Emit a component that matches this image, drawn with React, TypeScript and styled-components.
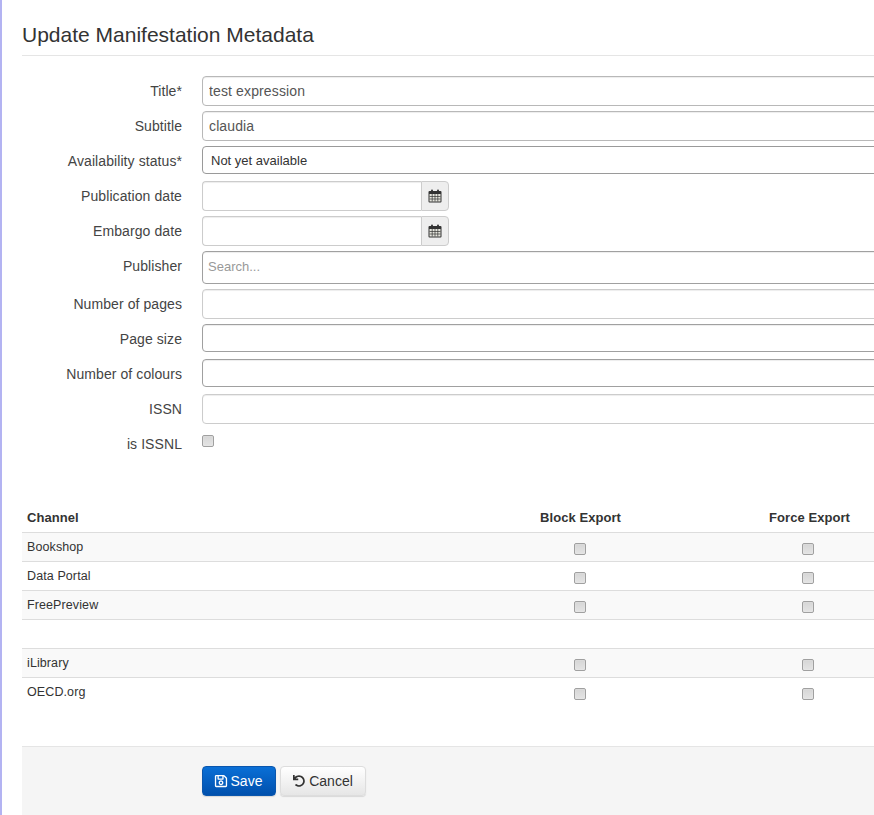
import React from 'react';
import styled, { createGlobalStyle } from 'styled-components';
import { FaRegSave, FaUndo } from 'react-icons/fa';

const GlobalStyle = createGlobalStyle`
  html, body {
    margin: 0;
    padding: 0;
    height: 100%;
    overflow: hidden;
    background: #fff;
  }
  body {
    font-family: 'Liberation Sans', Arial, sans-serif;
    font-size: 14px;
    color: #333;
  }
`;

const Page = styled.div`
  width: 874px;
  height: 815px;
  box-sizing: border-box;
  overflow: hidden;
  border-left: 2px solid #b3b3f2;
  padding: 22px 0 0 20px;
`;

const Content = styled.div`
  width: 902px;
`;

const Heading = styled.h2`
  margin: 0 0 20px;
  padding: 1px 0 8px;
  border-bottom: 1px solid #e5e5e5;
  font-size: 21px;
  line-height: 24px;
  font-weight: 400;
  color: #333;
`;

const FormRow = styled.div`
  display: grid;
  grid-template-columns: 160px 1fr;
  column-gap: 20px;
  align-items: start;
  min-height: 30px;
  margin-bottom: 5px;
`;

const RowLabel = styled.label`
  display: block;
  text-align: right;
  line-height: 30px;
  letter-spacing: 0.08px;
  color: #444;
`;

const TextInput = styled.input<{ $border?: string; $height?: number }>`
  display: block;
  box-sizing: border-box;
  width: 100%;
  height: ${(p) => p.$height ?? 30}px;
  padding: 0 6px;
  border: 1px solid ${(p) => p.$border ?? '#ccc'};
  border-radius: 4px;
  box-shadow: inset 0 1px 1px rgba(0, 0, 0, 0.075);
  background: #fff;
  font: 14px 'Liberation Sans', Arial, sans-serif;
  letter-spacing: 0.13px;
  color: #555;
  outline: none;

  &::placeholder {
    color: #999;
    opacity: 1;
  }
`;

const SearchInput = styled(TextInput)`
  height: 33px;
  padding: 0 5px 2px;
  font-size: 13px;
  letter-spacing: 0;
`;

const SelectInput = styled.select`
  display: block;
  box-sizing: border-box;
  width: 100%;
  height: 28px;
  padding: 0 8px;
  border: 1px solid #9a9a9a;
  border-radius: 4px;
  background: #fff;
  font: 13px 'Liberation Sans', Arial, sans-serif;
  color: #333;
  appearance: none;
  outline: none;
`;

const DateGroup = styled.div`
  display: flex;
  width: 247px;
  height: 30px;
`;

const DateInput = styled(TextInput)`
  flex: 1;
  width: auto;
  min-width: 0;
  border-radius: 4px 0 0 4px;
  border-right: 0;
`;

const DateAddon = styled.span`
  display: flex;
  align-items: center;
  justify-content: center;
  box-sizing: border-box;
  width: 28px;
  border: 1px solid #ccc;
  border-radius: 0 4px 4px 0;
  background: #eee;
`;

const CheckBox = styled.input.attrs({ type: 'checkbox' })`
  display: block;
  box-sizing: border-box;
  width: 12px;
  height: 12px;
  margin: 0;
  appearance: none;
  border: 1px solid #a0a0a0;
  border-radius: 2px;
  background: linear-gradient(to bottom, #d6d6d6, #e4e4e4);
  box-shadow: inset 0 0 1px #fff;
`;

const CheckRow = styled(FormRow)`
  margin-bottom: 0;
`;

const CheckWrap = styled.div`
  padding-top: 6px;
`;

const ChannelTable = styled.table`
  width: 900px;
  margin-top: 43px;
  border-collapse: collapse;
  table-layout: fixed;
  font-size: 12.5px;
  letter-spacing: 0.1px;
`;

const WideCol = styled.col`
  width: 444px;
`;

const NarrowCol = styled.col`
  width: 228px;
`;

const HeadCell = styled.th<{ $center?: boolean }>`
  height: 30px;
  padding: ${(p) => (p.$center ? '0 0 0 1px' : '0 5px')};
  border-bottom: 1px solid #ddd;
  text-align: ${(p) => (p.$center ? 'center' : 'left')};
  font-size: 13px;
  font-weight: 700;
  letter-spacing: 0.05px;
  color: #333;

  &:nth-child(3) {
    padding-left: 3px;
  }
`;

const TableRow = styled.tr<{ $striped?: boolean; $last?: boolean }>`
  height: 29px;
  background: ${(p) => (p.$striped ? '#f9f9f9' : '#fff')};
  border-bottom: ${(p) => (p.$last ? '0' : '1px solid #ddd')};
`;

const NameCell = styled.td`
  padding: 0 5px 1px;
  color: #333;
`;

const BoxCell = styled.td`
  padding: 3px 0 0;

  & > input {
    margin: 0 auto;
  }
`;

const ActionBar = styled.div`
  display: flex;
  gap: 4px;
  height: 69px;
  box-sizing: border-box;
  margin-top: 39px;
  padding: 19px 0 0 180px;
  border-top: 1px solid #e5e5e5;
  background: #f5f5f5;
`;

const Button = styled.button<{ $primary?: boolean }>`
  display: inline-flex;
  align-items: center;
  justify-content: center;
  gap: ${(p) => (p.$primary ? 3 : 4)}px;
  box-sizing: border-box;
  height: 30px;
  width: ${(p) => (p.$primary ? 74 : 86)}px;
  padding: 0 ${(p) => (p.$primary ? 2 : 0)}px 0 0;
  border: 1px solid ${(p) => (p.$primary ? '#0a56ad' : '#ddd')};
  border-radius: 4px;
  background: ${(p) =>
    p.$primary
      ? 'linear-gradient(to bottom, #0a6fd6, #0050ad)'
      : 'linear-gradient(to bottom, #fff, #e6e6e6)'};
  box-shadow: 0 1px 1px rgba(0, 0, 0, 0.12);
  font: 14px 'Liberation Sans', Arial, sans-serif;
  color: ${(p) => (p.$primary ? '#fff' : '#333')};
`;

// glyphicon style calendar, the packages only have the solid one
const CalendarIcon = () => (
  <svg width="14" height="14" viewBox="0 0 14 14" aria-hidden="true">
    <rect x="0.5" y="2" width="13" height="11.5" fill="#333" rx="1" />
    <rect x="3" y="0.5" width="2" height="3" fill="#333" rx="1" />
    <rect x="9" y="0.5" width="2" height="3" fill="#333" rx="1" />
    <rect x="1.5" y="5" width="11" height="7.5" fill="#e6e6de" />
    <path d="M1.5 7.5h11M1.5 10h11M4.2 5v7.5M7 5v7.5M9.8 5v7.5" stroke="#333" strokeWidth="0.7" />
  </svg>
);

const channels = [
  { name: 'Bookshop', striped: true },
  { name: 'Data Portal' },
  { name: 'FreePreview', striped: true },
  { name: '', empty: true },
  { name: 'iLibrary', striped: true },
  { name: 'OECD.org', last: true },
];

const App: React.FC = () => {
  return (
    <Page>
      <GlobalStyle />
      <Content>
        <Heading>Update Manifestation Metadata</Heading>

        <form>
          <FormRow>
            <RowLabel>Title*</RowLabel>
            <TextInput defaultValue="test expression" $border="#b8b8b8" />
          </FormRow>
          <FormRow>
            <RowLabel>Subtitle</RowLabel>
            <TextInput defaultValue="claudia" $border="#b8b8b8" />
          </FormRow>
          <FormRow>
            <RowLabel>Availability status*</RowLabel>
            <SelectInput defaultValue="no">
              <option value="no">Not yet available</option>
            </SelectInput>
          </FormRow>
          <FormRow>
            <RowLabel>Publication date</RowLabel>
            <DateGroup>
              <DateInput />
              <DateAddon>
                <CalendarIcon />
              </DateAddon>
            </DateGroup>
          </FormRow>
          <FormRow>
            <RowLabel>Embargo date</RowLabel>
            <DateGroup>
              <DateInput />
              <DateAddon>
                <CalendarIcon />
              </DateAddon>
            </DateGroup>
          </FormRow>
          <FormRow>
            <RowLabel>Publisher</RowLabel>
            <SearchInput placeholder="Search..." $border="#a0a0a0" />
          </FormRow>
          <FormRow>
            <RowLabel>Number of pages</RowLabel>
            <TextInput />
          </FormRow>
          <FormRow>
            <RowLabel>Page size</RowLabel>
            <TextInput $border="#a0a0a0" $height={28} />
          </FormRow>
          <FormRow>
            <RowLabel>Number of colours</RowLabel>
            <TextInput $border="#a0a0a0" $height={28} />
          </FormRow>
          <FormRow>
            <RowLabel>ISSN</RowLabel>
            <TextInput />
          </FormRow>
          <CheckRow>
            <RowLabel>is ISSNL</RowLabel>
            <CheckWrap>
              <CheckBox />
            </CheckWrap>
          </CheckRow>

          <ChannelTable>
            <colgroup>
              <WideCol />
              <NarrowCol />
              <NarrowCol />
            </colgroup>
            <thead>
              <tr>
                <HeadCell>Channel</HeadCell>
                <HeadCell $center>Block Export</HeadCell>
                <HeadCell $center>Force Export</HeadCell>
              </tr>
            </thead>
            <tbody>
              {channels.map((c, i) => (
                <TableRow key={i} $striped={c.striped} $last={c.last}>
                  <NameCell>{c.name}</NameCell>
                  <BoxCell>{!c.empty && <CheckBox />}</BoxCell>
                  <BoxCell>{!c.empty && <CheckBox />}</BoxCell>
                </TableRow>
              ))}
            </tbody>
          </ChannelTable>

          <ActionBar>
            <Button type="button" $primary>
              <FaRegSave size={14} /> Save
            </Button>
            <Button type="button">
              <FaUndo size={12} /> Cancel
            </Button>
          </ActionBar>
        </form>
      </Content>
    </Page>
  );
};

export default App;
